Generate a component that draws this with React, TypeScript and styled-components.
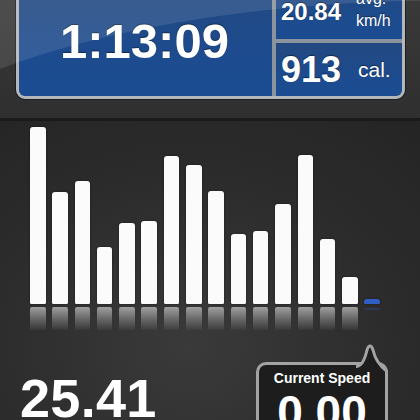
import * as React from 'react';
import styled, { createGlobalStyle } from 'styled-components';

const GlobalStyle = createGlobalStyle`
  html, body {
    margin: 0;
    padding: 0;
    background: #2a2a2a;
  }
  body {
    font-family: "Liberation Sans", Arial, Helvetica, sans-serif;
    color: #fff;
  }
`;

const SScreen = styled.div`
  width: 420px;
  height: 420px;
  overflow: hidden;
  display: flex;
  flex-direction: column;
  background: #2a2a2a;
`;

const SHeader = styled.div`
  position: relative;
  height: 121px;
  flex: none;
  box-sizing: border-box;
  padding-left: 16px;
  background: linear-gradient(180deg, #393939 0%, #323232 70%, #2f2f2f 100%);
  border-bottom: 3px solid #1a1a1a;

  &::after {
    content: '';
    position: absolute;
    inset: 0;
    pointer-events: none;
    background: radial-gradient(
      ellipse 600px 202px at 450px 202px,
      rgba(255, 255, 255, 0) 99.6%,
      rgba(255, 255, 255, 0.1) 100%
    );
  }
`;

const SPanel = styled.div`
  margin-top: -18px;
  width: 389px;
  height: 117px;
  box-sizing: border-box;
  border: 3px solid #b3b7bb;
  border-radius: 9px;
  box-shadow: 0 0 0 1px #1e1e1e;
  overflow: hidden;
  display: grid;
  grid-template-columns: 253px 126px;
  gap: 4px;
  background: #8b939c;
`;

const SCell = styled.div`
  background: linear-gradient(180deg, #23497f 0%, #1d4b8e 60%, #1b4c92 100%);
  display: flex;
  align-items: center;
  text-shadow: 0 -1px 1px rgba(0, 0, 0, 0.45);
`;

const STimeCell = styled(SCell)`
  justify-content: center;
`;

const SSideColumn = styled.div`
  display: grid;
  grid-template-rows: 54px 53px;
  gap: 4px;
`;

const SStatCell = styled(SCell)`
  padding-left: 5px;
`;

const STime = styled.div`
  font-size: 49px;
  font-weight: 700;
  line-height: 1;
  margin: 2px 0 0 -2px;
`;

const SValue = styled.div<{ size: number }>`
  font-size: ${({ size }) => size}px;
  font-weight: 700;
  line-height: 1;
  width: ${({ size }) => (size > 30 ? 77 : 75)}px;
  margin-top: ${({ size }) => (size > 30 ? 0 : -1)}px;
`;

const SUnitStack = styled.div`
  margin-top: -4px;
`;

const SUnit = styled.div<{ size: number }>`
  font-size: ${({ size }) => size}px;
  line-height: 22px;
`;

const SLower = styled.div`
  flex: 1;
  display: flex;
  flex-direction: column;
  background: radial-gradient(
    ellipse 360px 300px at 45% 70%,
    #3a3a3a 0%,
    #2c2c2c 55%,
    #242424 100%
  );
`;

const SChart = styled.div`
  height: 209px;
  flex: none;
  display: flex;
  align-items: flex-end;
  gap: 6.8px;
  padding-left: 30px;
`;

const SBarColumn = styled.div`
  width: 15.5px;
  display: flex;
  flex-direction: column;
`;

const SBar = styled.div<{ blue?: boolean }>`
  background: ${({ blue }) => (blue ? '#2f5fc4' : '#fbfbfb')};
  border-radius: 3px 3px 1.5px 1.5px;
  box-shadow: 0 0 2px rgba(0, 0, 0, 0.5);
`;

const SReflection = styled.div<{ blue?: boolean }>`
  margin-top: ${({ blue }) => (blue ? 4 : 3)}px;
  border-radius: 2px 2px 0 0;
  margin-bottom: ${({ blue }) => (blue ? 19 : 0)}px;
  background: ${({ blue }) =>
    blue
      ? 'linear-gradient(180deg, rgba(47, 95, 196, 0.35), rgba(47, 95, 196, 0))'
      : 'linear-gradient(180deg, rgba(178, 178, 178, 0.85) 0%, rgba(140, 140, 140, 0.55) 55%, rgba(90, 90, 90, 0.15) 100%)'};
`;

const SStats = styled.div`
  display: flex;
  justify-content: space-between;
  align-items: flex-start;
  padding: 0 32px 0 20px;
`;

const SDistance = styled.div`
  font-size: 54px;
  font-weight: 700;
  line-height: 54px;
  margin-top: 41px;
  letter-spacing: 0.3px;
`;

const SBubble = styled.div`
  position: relative;
  margin-top: 32px;
  width: 132px;
  height: 80px;
  box-sizing: border-box;
  border: 3px solid #a3a3a3;
  border-radius: 10px;
  background: #1d1d1d;
  text-align: center;
  padding-top: 5px;
`;

const STail = styled.svg`
  position: absolute;
  left: 95px;
  top: -22px;
  width: 36px;
  height: 34px;
  overflow: visible;
`;

const SBubbleLabel = styled.div`
  position: relative;
  font-size: 14px;
  font-weight: 700;
  line-height: 16px;
`;

const SBubbleValue = styled.div`
  position: relative;
  font-size: 46px;
  font-weight: 700;
  line-height: 46px;
  margin-top: 3px;
`;

const bars = [177, 112, 123, 57, 81, 83, 148, 139, 113, 70, 73, 100, 149, 65, 27];

const tailShape =
  'M2 23.5 C8 23.5 11 16 13 7 C14.6 1.5 17.4 1.5 19 7 C21 16 26 23 32.5 28';

const App = () => {
  return (
    <>
      <GlobalStyle />
      <SScreen>
        <SHeader>
          <SPanel>
            <STimeCell>
              <STime>1:13:09</STime>
            </STimeCell>
            <SSideColumn>
              <SStatCell>
                <SValue size={24}>20.84</SValue>
                <SUnitStack>
                  <SUnit size={16}>avg.</SUnit>
                  <SUnit size={16}>km/h</SUnit>
                </SUnitStack>
              </SStatCell>
              <SStatCell>
                <SValue size={36}>913</SValue>
                <SUnit size={21}>cal.</SUnit>
              </SStatCell>
            </SSideColumn>
          </SPanel>
        </SHeader>
        <SLower>
          <SChart>
            {bars.map((h, i) => (
              <SBarColumn key={i}>
                <SBar style={{ height: h }} />
                <SReflection style={{ height: Math.min(h, 23) }} />
              </SBarColumn>
            ))}
            <SBarColumn>
              <SBar blue style={{ height: 5 }} />
              <SReflection blue style={{ height: 3 }} />
            </SBarColumn>
          </SChart>
          <SStats>
            <SDistance>25.41</SDistance>
            <SBubble>
              <STail viewBox="0 0 36 34">
                <path d={`${tailShape} L32.5 34 L2 34 Z`} fill="#1d1d1d" />
                <path
                  d={`${tailShape} L32.5 34`}
                  fill="none"
                  stroke="#a3a3a3"
                  strokeWidth={3}
                  strokeLinejoin="round"
                />
              </STail>
              <SBubbleLabel>Current Speed</SBubbleLabel>
              <SBubbleValue>0.00</SBubbleValue>
            </SBubble>
          </SStats>
        </SLower>
      </SScreen>
    </>
  );
};

export default App;
